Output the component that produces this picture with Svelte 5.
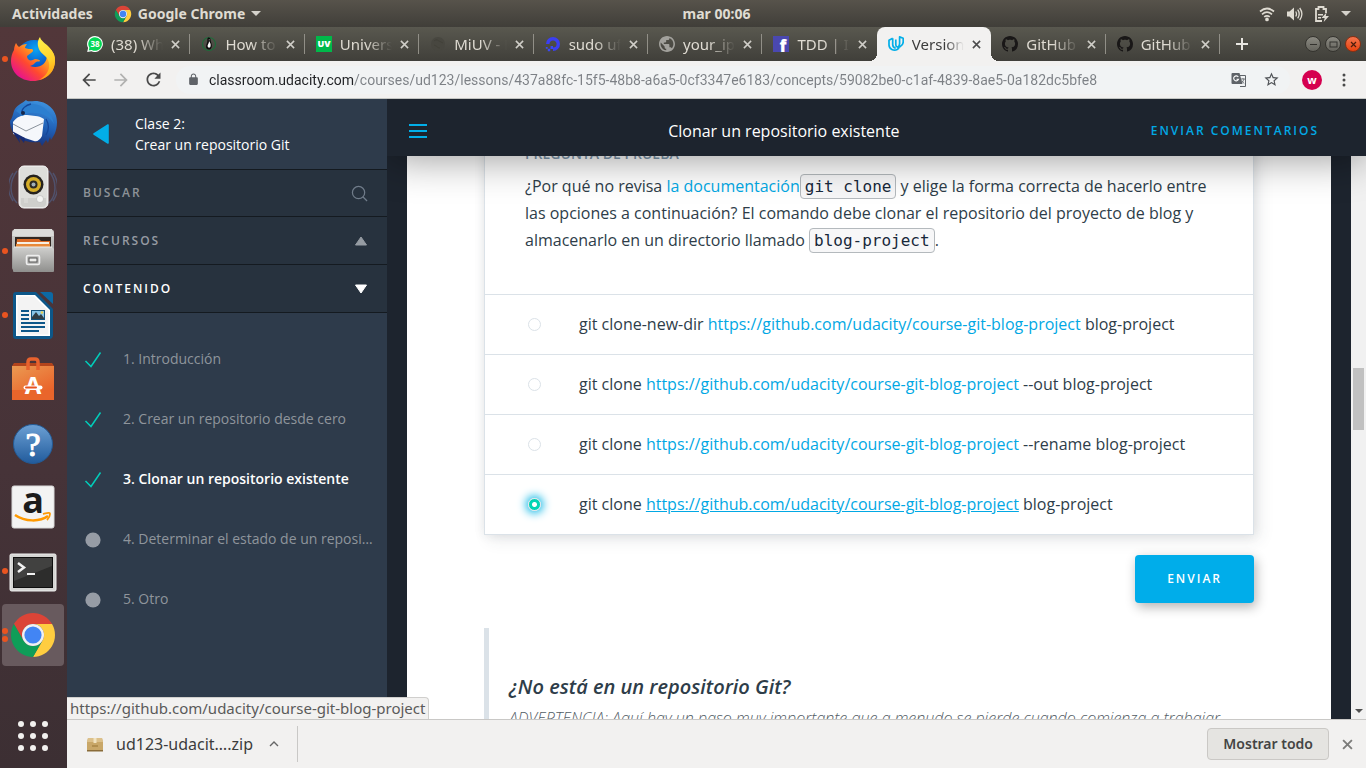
<script>
  const tabs = [
    { icon: 'whatsapp', title: '(38) WhatsApp' },
    { icon: 'penguin', title: 'How to install' },
    { icon: 'uv', title: 'Universidad' },
    { icon: 'miuv', title: 'MiUV - Login' },
    { icon: 'ocean', title: 'sudo ufw allow' },
    { icon: 'globe', title: 'your_ip_address' },
    { icon: 'facebook', title: 'TDD | Inicio' },
    { icon: 'udacity', title: 'Version Control', active: true },
    { icon: 'github', title: 'GitHub - course' },
    { icon: 'github', title: 'GitHub - course' }
  ];

  const apps = [
    { name: 'Firefox', dots: 1 },
    { name: 'Thunderbird', dots: 0 },
    { name: 'Rhythmbox', dots: 0 },
    { name: 'Archivos', dots: 1 },
    { name: 'Writer', dots: 1 },
    { name: 'Software', dots: 0 },
    { name: 'Ayuda', dots: 0 },
    { name: 'Amazon', dots: 0 },
    { name: 'Terminal', dots: 1 },
    { name: 'Chrome', dots: 2, focused: true }
  ];

  const lessons = [
    { title: '1. Introducción', done: true },
    { title: '2. Crear un repositorio desde cero', done: true },
    { title: '3. Clonar un repositorio existente', done: true, current: true },
    { title: '4. Determinar el estado de un repositorio', done: false },
    { title: '5. Otro', done: false }
  ];

  const repo = 'https://github.com/udacity/course-git-blog-project';
  const options = [
    { before: 'git clone-new-dir', after: 'blog-project' },
    { before: 'git clone', after: '--out blog-project' },
    { before: 'git clone', after: '--rename blog-project' },
    { before: 'git clone', after: 'blog-project', hovered: true }
  ];
  let chosen = $state(3);
  let url = $state('classroom.udacity.com/courses/ud123/lessons/437a88fc-15f5-48b8-a6a5-0cf3347e6183/concepts/59082be0-c1af-4839-8ae5-0a182dc5bfe8');
</script>

{#snippet chromeLogo(size)}
  <svg width={size} height={size} viewBox="0 0 48 48" aria-hidden="true">
    <path fill="#db4437" d="M24 13H43.05A22 22 0 0 0 4.95 13L14.47 29.5A11 11 0 0 1 24 13z" />
    <path fill="#ffcd40" d="M24 13H43.05A22 22 0 0 1 24 46L33.53 29.5A11 11 0 0 0 24 13z" />
    <path fill="#0f9d58" d="M14.47 29.5L4.95 13A22 22 0 0 0 24 46L33.53 29.5A11 11 0 0 1 14.47 29.5z" />
    <circle cx="24" cy="24" r="11" fill="#f1f1f1" />
    <circle cx="24" cy="24" r="8.6" fill="#4285f4" />
  </svg>
{/snippet}

{#snippet cross(color, size)}
  <svg width={size} height={size} viewBox="0 0 10 10" aria-hidden="true">
    <path d="M1 1L9 9M9 1L1 9" stroke={color} stroke-width="1.7" />
  </svg>
{/snippet}

{#snippet favicon(kind)}
  <svg class="favicon" width="16" height="16" viewBox="0 0 16 16" aria-hidden="true">
    {#if kind === 'whatsapp'}
      <path d="M8 0a8 8 0 1 1-3.6 15.2L.2 16l.9-4A8 8 0 0 1 8 0z" fill="#fff" />
      <path d="M8 1.2a6.8 6.8 0 1 1-3.3 12.7l-3 .7.7-2.9A6.8 6.8 0 0 1 8 1.2z" fill="#05d857" />
      <text x="8" y="11" text-anchor="middle" font-size="8" font-weight="700" fill="#fff">38</text>
    {:else if kind === 'penguin'}
      <circle cx="8" cy="8" r="6.5" fill="none" stroke="#1e6b3a" stroke-width="1.2" />
      <path d="M7.3 1.5c1.7-.2 2.4 1 2.2 2.6-.1 1.4 1.5 3 1.3 5.8-.2 2.4-1.500 3.600-2.900 3.600-1.800 0-3-1.200-2.800-3.300.2-2.300 1.300-3.400 1.300-5.300 0-1.600-.2-3 .9-3.400z" fill="#0b0b0b" />
      <path d="M8 5c1.500 2 2 3.500 1.500 5.500-.4 1.500-2.500 1.600-2.900.1C6.200 8.800 8.200 7.500 8 5z" fill="#fff" />
      <path d="M7.700 3.500l1.300.3-1.100.7z" fill="#fff" />
    {:else if kind === 'uv'}
      <rect width="16" height="16" fill="#00b84a" />
      <text x="8" y="11" text-anchor="middle" font-size="9" font-weight="800" fill="#fff">UV</text>
    {:else if kind === 'miuv'}
      <circle cx="8" cy="8" r="7" fill="#484740" />
      <path d="M4 5c2-2 4-1 5 0s3 1 4 2M4 9c2 0 3 3 6 3" stroke="#424139" fill="none" />
    {:else if kind === 'ocean'}
      <path d="M8 13.300A5.300 5.300 0 1 0 2.700 8" fill="none" stroke="#3b3ff2" stroke-width="3.400" />
      <path d="M5.500 10H8v3H5.500zM2.800 12.800h2.400v2.400H2.800zM.8 10.900h1.900v1.900H.8z" fill="#3b49f4" />
    {:else if kind === 'globe'}
      <path transform="translate(-1.6 -1.6) scale(.8)" fill="#a2a19c" d="M12 2C6.480 2 2 6.480 2 12s4.480 10 10 10 10-4.480 10-10S17.520 2 12 2zm-1 17.930c-3.950-.49-7-3.850-7-7.930 0-.62.08-1.210.21-1.790L9 15v1c0 1.100.9 2 2 2v1.930zm6.900-2.540c-.26-.81-1-1.390-1.900-1.390h-1v-3c0-.55-.45-1-1-1H8v-2h2c.55 0 1-.45 1-1V7h2c1.100 0 2-.9 2-2v-.41c2.930 1.190 5 4.060 5 7.410 0 2.080-.8 3.970-2.100 5.390z" />
    {:else if kind === 'facebook'}
      <rect width="16" height="16" fill="#4a48b0" />
      <text x="10" y="16" text-anchor="middle" font-size="17" font-weight="800" fill="#fff">f</text>
    {:else if kind === 'udacity'}
      <path d="M4.700 2.300L1 4.200v4.900c0 3.900 4.800 6.200 8.200 4.400 1.500-.8 2-2.300 2-3.800M4.700 2.300v6.300c0 2 1.200 3.300 3 3.500M7.800 3.500v5.300c0 2.600 2.600 2.700 4.200 1.900 2.300-1.100 3.200-2.600 3.200-4.700V2.200L11.600.9v6.500c0 1.500-.5 2.800-1.700 3.500" fill="none" stroke="#02aee8" stroke-width="1.700" stroke-linejoin="round" />
    {:else}
      <path fill="#191717" d="M8 0C3.580 0 0 3.580 0 8c0 3.540 2.290 6.530 5.470 7.590.4.070.55-.17.55-.38 0-.19-.01-.82-.01-1.490-2.010.37-2.530-.49-2.690-.94-.09-.23-.48-.94-.82-1.130-.28-.15-.68-.52-.01-.53.63-.01 1.080.58 1.230.82.72 1.210 1.870.87 2.330.66.07-.52.28-.87.51-1.070-1.780-.2-3.640-.89-3.640-3.950 0-.87.31-1.590.82-2.150-.08-.2-.36-1.020.08-2.120 0 0 .67-.21 2.200.82.64-.18 1.320-.27 2-.27s1.360.09 2 .27c1.530-1.040 2.200-.82 2.200-.82.44 1.100.16 1.920.08 2.120.51.56.82 1.270.82 2.150 0 3.070-1.870 3.750-3.650 3.950.29.25.54.73.54 1.480 0 1.070-.01 1.930-.01 2.200 0 .21.15.46.55.38A8.010 8.010 0 0 0 16 8c0-4.420-3.580-8-8-8z" />
    {/if}
  </svg>
{/snippet}

{#snippet appIcon(name)}
  {#if name === 'Chrome'}
    {@render chromeLogo(48)}
  {:else}
    <svg width="48" height="48" viewBox="0 0 48 48" aria-hidden="true">
      {#if name === 'Firefox'}
        <defs>
          <linearGradient id="ff-body" x1=".9" y1=".1" x2=".15" y2=".85">
            <stop offset="0" stop-color="#ffd83a" /><stop offset=".35" stop-color="#ff9a1f" /><stop offset=".65" stop-color="#ff4a2f" /><stop offset="1" stop-color="#e8148c" />
          </linearGradient>
          <linearGradient id="ff-tail" x1=".3" y1="0" x2=".5" y2="1">
            <stop offset="0" stop-color="#fff04a" /><stop offset=".6" stop-color="#ffd02a" /><stop offset="1" stop-color="#ff9a12" />
          </linearGradient>
          <radialGradient id="ff-globe" cx=".55" cy=".25" r=".8">
            <stop offset="0" stop-color="#0aa5f5" /><stop offset=".6" stop-color="#0a58c8" /><stop offset="1" stop-color="#20196b" />
          </radialGradient>
        </defs>
        <circle cx="25" cy="23" r="18" fill="url(#ff-globe)" />
        <path d="M7 8c1 2 2 3 3 4 2-2 5-3 8-3-1 1-2 3-2 4 2 1 5 1 7 1 2 1 1 3-1 4l-4 3c0 2 1 3 2 4 2 1 4 0 6-1 3 0 5 1 5 2-1 1-2 0-4 1-2 2-3 3-6 4 8 3 17-1 17-11 0-5-2-8-4-11 8 4 12 9 12 16 0 12-9 21-22 21S2 37 2 26c0-4 1-8 3-11 0-3 1-5 2-7z" fill="url(#ff-body)" />
        <path d="M31 2c1 4 5 6 9 10 4 4 6 9 6 14 0 10-7 17-16 19 7-4 11-9 10-17-1-6-6-8-9-12-3-5-3-10 0-14z" fill="url(#ff-tail)" />
      {:else if name === 'Thunderbird'}
        <defs>
          <linearGradient id="tb" x1=".7" y1="0" x2=".4" y2="1">
            <stop offset="0" stop-color="#3f94e0" /><stop offset=".55" stop-color="#1f5fb5" /><stop offset="1" stop-color="#162c73" />
          </linearGradient>
        </defs>
        <path d="M5 12C7 6 14 4 17 1c1 2 5 1 9 1 12 0 22 9 22 21 0 10-4 15-6 18l-1-3-2 6-2-3-4 6-2-4C16 45 1 38 1 22c2-2 3-7 4-10z" fill="url(#tb)" />
        <path d="M4 23c4-5 8-7 14-7 6 1 11 0 17 4l-2 17c-2 4-5 6-8 5L4 35z" fill="#f5f7fb" />
        <path d="M4 25l13 7 17-8" fill="none" stroke="#8a929c" />
        <path d="M7 12c4-6 11-8 18-7 9 1 18 8 20 20-4-7-11-11-19-11-5-1-9 1-13 3-2-2-4-4-6-5z" fill="#2c7fd0" />
        <path d="M22 5c-5 1-10 5-9 9M37 20c3 5 3 11 0 16" stroke="#14469a" stroke-width="1.300" fill="none" />
        <circle cx="14" cy="14" r="2" fill="#16264a" />
        <path d="M3 32l8 12-1-6 5 6 1-5z" fill="#172b74" />
      {:else if name === 'Rhythmbox'}
        <path d="M8 8C0 18 0 32 8 40M4 10C-2 19-2 29 4 38M40 8c8 10 8 24 0 32M44 10c6 9 6 19 0 28" fill="none" stroke="#50516b" stroke-width="1.500" />
        <rect x="10" y="3" width="29" height="42" rx="5" fill="#dededb" stroke="#f8f8f8" />
        <path d="M12 35h25v5a4 4 0 0 1-4 4H16a4 4 0 0 1-4-4z" fill="#cfcfcc" />
        <circle cx="24.500" cy="21.500" r="10" fill="#25221e" />
        <circle cx="24.500" cy="21.500" r="7.500" fill="#d5ad28" />
        <circle cx="24.500" cy="21.500" r="4" fill="#2c2a25" />
        <circle cx="24.500" cy="21.500" r="2" fill="#a2b0b8" />
        <circle cx="31" cy="36" r="3.500" fill="#f4f4f2" stroke="#aaa" stroke-width=".5" />
        <rect x="15" y="35" width="4" height="5" fill="#d8d8d5" />
      {:else if name === 'Archivos'}
        <defs>
          <linearGradient id="cab" x2="0" y2="1"><stop offset="0" stop-color="#d0d0ce" /><stop offset="1" stop-color="#8f8f8d" /></linearGradient>
        </defs>
        <rect x="3" y="3" width="42" height="40" rx="2" fill="url(#cab)" />
        <path d="M5 2h38l2 7H3z" fill="#dcdcda" />
        <rect x="6" y="10" width="36" height="10" fill="#312722" />
        <path d="M8 12h22l2 2h9v6H7z" fill="#dc6b27" />
        <path d="M8 15h32v2H8z" fill="#f6efe3" /><path d="M7 17h34v3H7z" fill="#e88939" />
        <path d="M5 20h38l2 2v22a1 1 0 0 1-1 1H5a1 1 0 0 1-1-1V21z" fill="url(#cab)" />
        <path d="M5 20h38" stroke="#eee" />
        <rect x="17.500" y="28.500" width="13" height="9" rx="1.500" fill="#b5b5b3" stroke="#eee" stroke-width="1.600" />
        <rect x="20" y="31" width="8" height="4" fill="#ececea" stroke="#555" />
      {:else if name === 'Writer'}
        <path d="M7 1h20l17 17v26a4 4 0 0 1-4 4H7a3 3 0 0 1-3-3V4a3 3 0 0 1 3-3z" fill="#0d5789" />
        <path d="M7 4h19l15 15v26H7z" fill="#fff" />
        <path d="M8.500 5.500H25l14.500 14.500V43.500h-31z" fill="#f3f3f3" />
        <path d="M31 1h10a3 3 0 0 1 3 3v9z" fill="#0d69a4" />
        <path d="M12 20h8M12 24h8M12 28h8M12 32h24M12 36h24M12 40h18" stroke="#0d5789" stroke-width="2" />
        <rect x="22.500" y="19.500" width="13" height="9" fill="#87c4e8" stroke="#12517c" />
        <path d="M23 28v-2l4-5 3 4 2-2 3 4v1z" fill="#303d45" /><circle cx="33" cy="21.500" r="1.300" fill="#e9cf50" />
      {:else if name === 'Software'}
        <defs>
          <linearGradient id="bag" x2=".6" y2="1"><stop offset="0" stop-color="#eb9a52" /><stop offset="1" stop-color="#ea5f27" /></linearGradient>
        </defs>
        <path d="M5 8h38l2 3H3z" fill="#b3441c" />
        <path d="M3 11h42v34H3z" fill="url(#bag)" /><path d="M3 35h42v10H3z" fill="#e9652b" />
        <path d="M19 15V7q0-3 3-3h4q3 0 3 3v8" fill="none" stroke="#e8622e" stroke-width="3.500" />
        <text x="24" y="39" text-anchor="middle" font-size="24" font-weight="700" fill="#fff">A</text>
        <rect x="14.500" y="30.500" width="19" height="4" rx="2" fill="#fff" /><rect x="16" y="31.500" width="12" height="2" rx="1" fill="#e95420" />
      {:else if name === 'Ayuda'}
        <defs>
          <linearGradient id="help" x2="0" y2="1"><stop offset="0" stop-color="#6ca0d4" /><stop offset="1" stop-color="#215b9c" /></linearGradient>
        </defs>
        <circle cx="24" cy="25" r="19.500" fill="url(#help)" stroke="#235a94" />
        <text x="24" y="37" text-anchor="middle" font-size="34" font-weight="400" fill="#fff" stroke="#fff" class="serif">?</text>
      {:else if name === 'Amazon'}
        <rect x="3" y="3" width="42" height="42" rx="2" fill="#f3f3f3" stroke="#dadada" />
        <text x="24" y="30" text-anchor="middle" font-size="36" font-weight="700" fill="#1c1c1c">a</text>
        <path d="M6 32c10 7 25 7 33 1" fill="none" stroke="#ff9900" stroke-width="2.500" />
        <path d="M34 31c4-1 7-2 7 0s-1 4-3 6" fill="none" stroke="#ff9900" stroke-width="1.800" />
      {:else if name === 'Terminal'}
        <rect x="1" y="7" width="46" height="37" rx="1.500" fill="#d5d5d3" stroke="#eee" />
        <rect x="4.500" y="10.500" width="39" height="30" fill="#2d2d2c" stroke="#0e0e0e" />
        <path d="M5 11h38v8L5 34z" fill="#414140" />
        <path d="M9 16l6 4.500L9 25" fill="none" stroke="#f1f1f1" stroke-width="2.500" /><path d="M18 27h8" stroke="#f1f1f1" stroke-width="2" />
      {/if}
    </svg>
  {/if}
{/snippet}

<div class="desktop">
  <header class="system-bar">
    <div class="system-side">
      <button class="plain">Actividades</button>
      <button class="plain app-menu">
        {@render chromeLogo(18)}
        <span>Google Chrome</span>
        <svg width="10" height="6" viewBox="0 0 10 6" aria-hidden="true"><path d="M0 0h10L5 5z" fill="#d5d2cb" /></svg>
      </button>
    </div>
    <time>mar 00:06</time>
    <div class="system-side indicators">
      <svg width="16" height="16" viewBox="0 0 16 16" fill="none" stroke="#dfdbd2" stroke-width="1.700" aria-hidden="true">
        <path d="M1 5.500Q8-.5 15 5.500M3 8.300q5-4.200 10 0M5.200 10.900q2.800-2.200 5.600 0" /><circle cx="8" cy="13.400" r="1" fill="#dfdbd2" />
      </svg>
      <svg width="17" height="16" viewBox="0 0 17 16" aria-hidden="true">
        <path d="M1 5.500h2.500L8 1.500v13l-4.500-4H1z" fill="#dfdbd2" /><path d="M9.700 5.500q1.600 2.500 0 5M11.700 3.700q3 4.300 0 8.600M13.700 2q4.400 6 0 12" fill="none" stroke="#dfdbd2" stroke-width="1.300" />
      </svg>
      <svg width="16" height="18" viewBox="0 0 16 18" aria-hidden="true">
        <path d="M8 16H2V4h2.500V2h5v2H12v4" fill="none" stroke="#dfdbd2" stroke-width="1.800" /><path d="M4 9h5v1.500H4zM4 12h3v1.500H4z" fill="#dfdbd2" /><path d="M12.500 7.500L7.500 13h3.200l-1 4 5.300-6h-3.200z" fill="#dfdbd2" />
      </svg>
      <svg width="10" height="6" viewBox="0 0 10 6" aria-hidden="true"><path d="M0 0h10L5 5z" fill="#d5d2cb" /></svg>
    </div>
  </header>

  <div class="workspace">
    <nav class="dock" aria-label="Aplicaciones">
      {#each apps as app}
        <button class="dock-item" class:focused={app.focused} aria-label={app.name}>
          <span class="dots">{#each Array(app.dots) as _}<i></i>{/each}</span>
          {@render appIcon(app.name)}
        </button>
      {/each}
      <button class="all-apps" aria-label="Mostrar aplicaciones">
        {#each Array(9) as _}<i></i>{/each}
      </button>
    </nav>

    <div class="browser">
      <div class="tab-strip">
        <div class="tabs">
          {#each tabs as tab, i}
            <div class="tab" class:active={tab.active} class:divided={!tab.active && !tabs[i + 1]?.active}>
              {@render favicon(tab.icon)}
              <span class="tab-title">{tab.title}</span>
              <button class="plain close" aria-label="Cerrar pestaña">{@render cross(tab.active ? '#4c4c4c' : '#d0cec8', 9)}</button>
            </div>
          {/each}
        </div>
        <button class="plain" aria-label="Nueva pestaña">
          <svg width="12" height="12" viewBox="0 0 12 12" aria-hidden="true"><path d="M6 0v12M0 6h12" stroke="#e8e6e1" stroke-width="2" /></svg>
        </button>
        <div class="window-buttons">
          <button aria-label="Minimizar"><svg width="9" height="9" viewBox="0 0 9 9"><path d="M1 4.500h7" stroke="#33322e" /></svg></button>
          <button aria-label="Maximizar"><svg width="9" height="9" viewBox="0 0 9 9"><rect x="1" y="2" width="7" height="5" fill="none" stroke="#33322e" /></svg></button>
          <button class="shut" aria-label="Cerrar"><svg width="9" height="9" viewBox="0 0 9 9"><path d="M2 2l5 5M7 2L2 7" stroke="#4c1d0c" stroke-width="1.200" /></svg></button>
        </div>
      </div>

      <div class="toolbar">
        <button class="plain" aria-label="Atrás"><svg width="20" height="20" viewBox="0 0 24 24" fill="#4a4a4a"><path d="M20 11H7.830l5.590-5.590L12 4l-8 8 8 8 1.410-1.410L7.830 13H20v-2z" /></svg></button>
        <button class="plain" aria-label="Adelante"><svg width="20" height="20" viewBox="0 0 24 24" fill="#b1b1b0"><path d="M12 4l-1.410 1.410L16.170 11H4v2h12.170l-5.580 5.590L12 20l8-8z" /></svg></button>
        <button class="plain" aria-label="Recargar"><svg width="21" height="21" viewBox="0 0 24 24" fill="#4a4a4a"><path d="M17.650 6.350C16.200 4.900 14.210 4 12 4c-4.420 0-7.990 3.580-7.990 8s3.570 8 7.990 8c3.730 0 6.840-2.550 7.730-6h-2.080c-.82 2.330-3.040 4-5.650 4-3.310 0-6-2.690-6-6s2.690-6 6-6c1.660 0 3.140.69 4.220 1.780L13 11h7V4l-2.350 2.350z" /></svg></button>
        <div class="omnibox">
          <svg width="13" height="13" viewBox="0 0 24 24" fill="#5f6368" aria-hidden="true"><path d="M18 8h-1V6c0-2.760-2.240-5-5-5S7 3.240 7 6v2H6c-1.100 0-2 .9-2 2v10c0 1.100.9 2 2 2h12c1.100 0 2-.9 2-2V10c0-1.100-.9-2-2-2zM15.100 8H8.900V6c0-1.710 1.390-3.100 3.100-3.100s3.100 1.390 3.100 3.100v2z" /></svg>
          <input class="url" type="text" aria-label="Dirección" bind:value={url} />
          <button class="plain" aria-label="Traducir">
            <svg width="16" height="16" viewBox="0 0 16 16"><path d="M8 3.500h6.500v11H9" fill="#f1f3f4" stroke="#5f6368" /><path d="M1.500 1h7l3 11h-10A1 1 0 0 1 .5 11V2a1 1 0 0 1 1-1z" fill="#5f6368" /><path d="M7.300 5A2.500 2.500 0 1 0 7.500 7.300H5.500" fill="none" stroke="#fff" stroke-width="1.100" /><path d="M10 7h4M12 6v1M13 7c-.5 2-1.500 3-2.500 4M10.800 8.500q1 2 2.500 3" fill="none" stroke="#5f6368" stroke-width=".8" /></svg>
          </button>
          <button class="plain" aria-label="Añadir a marcadores">
            <svg width="17" height="17" viewBox="0 0 24 24" fill="#4f5256"><path d="M22 9.240l-7.190-.62L12 2 9.190 8.630 2 9.240l5.460 4.730L5.820 21 12 17.270 18.180 21l-1.630-7.030L22 9.240zM12 15.400l-3.760 2.270 1-4.280-3.320-2.880 4.380-.38L12 6.100l1.710 4.040 4.380.38-3.320 2.880 1 4.280L12 15.400z" /></svg>
          </button>
        </div>
        <button class="avatar">w</button>
        <button class="plain" aria-label="Menú"><svg width="4" height="14" viewBox="0 0 4 14" fill="#4a4a4a"><circle cx="2" cy="2" r="1.500" /><circle cx="2" cy="7" r="1.500" /><circle cx="2" cy="12" r="1.500" /></svg></button>
      </div>

      <div class="page">
        <aside class="sidebar">
          <a class="lesson-head" href="#clase">
            <svg width="16" height="20" viewBox="0 0 16 20" aria-hidden="true"><path d="M15 1v18L1 10z" fill="#02aee8" stroke="#02aee8" stroke-width="1.600" stroke-linejoin="round" /></svg>
            <span>Clase 2:<br />Crear un repositorio Git</span>
          </a>
          <label class="panel search">
            <input type="text" placeholder="BUSCAR" aria-label="BUSCAR" />
            <svg width="17" height="17" viewBox="0 0 18 18" fill="none" stroke="#707c8a" stroke-width="1.300" aria-hidden="true"><circle cx="8" cy="8" r="6.500" /><path d="M12.500 12.500L17 17" /></svg>
          </label>
          <button class="panel">RECURSOS
            <svg width="14" height="10" viewBox="0 0 14 10" aria-hidden="true"><path d="M7 1l5.500 8h-11z" fill="#969ca3" stroke="#969ca3" stroke-linejoin="round" /></svg>
          </button>
          <button class="panel open">CONTENIDO
            <svg width="14" height="10" viewBox="0 0 14 10" aria-hidden="true"><path d="M7 9l5.500-8h-11z" fill="#fff" stroke="#fff" stroke-linejoin="round" /></svg>
          </button>
          <ol>
            {#each lessons as lesson}
              <li class:current={lesson.current}>
                <svg width="18" height="18" viewBox="0 0 18 18" aria-hidden="true">
                  {#if lesson.done}
                    <path d="M1.500 11L7 16.500 16.500 2.500" fill="none" stroke="#02ccba" stroke-width="1.500" />
                  {:else}
                    <circle cx="9" cy="10" r="7.600" fill="#969ca5" />
                  {/if}
                </svg>
                <a href="#leccion">{lesson.title}</a>
              </li>
            {/each}
          </ol>
        </aside>

        <main>
          <header class="course-bar">
            <button class="plain" aria-label="Menú del curso">
              <svg width="18" height="14" viewBox="0 0 18 14"><path d="M0 1h18M0 7h18M0 13h18" stroke="#02aee8" stroke-width="2" /></svg>
            </button>
            <h1>Clonar un repositorio existente</h1>
            <a href="#comentarios">ENVIAR COMENTARIOS</a>
          </header>

          <div class="viewport">
            <div class="sheet">
              <article>
                <form class="quiz" onsubmit={(e) => e.preventDefault()}>
                  <div class="question">
                    <h2>PREGUNTA DE PRUEBA</h2>
                    <p>¿Por qué no revisa <a href="#doc">la documentación</a><code>git clone</code> y elige la forma correcta de hacerlo entre las opciones a continuación? El comando debe clonar el repositorio del proyecto de blog y almacenarlo en un directorio llamado <code>blog-project</code>.</p>
                  </div>
                  {#each options as option, i}
                    <div class="option">
                      <input type="radio" id={`opcion-${i}`} name="respuesta" value={i} bind:group={chosen} />
                      <label for={`opcion-${i}`}>{option.before} <a class:hovered={option.hovered} href={repo}>{repo}</a> {option.after}</label>
                    </div>
                  {/each}
                </form>
                <button class="submit">ENVIAR</button>
                <blockquote>
                  <h3>¿No está en un repositorio Git?</h3>
                  <p>ADVERTENCIA: Aquí hay un paso muy importante que a menudo se pierde cuando comienza a trabajar</p>
                </blockquote>
              </article>
            </div>
            <div class="scrollbar">
              <div class="thumb"></div>
              <svg width="8" height="5" viewBox="0 0 8 5" aria-hidden="true"><path d="M0 0h8L4 4z" fill="#505050" /></svg>
            </div>
          </div>
        </main>
        <div class="link-status">https://github.com/udacity/course-git-blog-project</div>
      </div>

      <footer class="downloads">
        <button class="plain download">
          <svg width="16" height="15" viewBox="0 0 16 15" aria-hidden="true"><path d="M1 1h14l1 4v9H0V5z" fill="#c9a768" /><path d="M1 1h14l1 4H0z" fill="#dcc08a" /><path d="M0 13h16v1.500H0z" fill="#8a6c39" /><path d="M6.500 1h3v5h-3z" fill="#f1e3c1" /><path d="M5 8h6v2H5z" fill="#b18e4e" /></svg>
          <span>ud123-udacit….zip</span>
          <svg width="10" height="6" viewBox="0 0 10 6" aria-hidden="true"><path d="M1 5l4-4 4 4" fill="none" stroke="#666" stroke-width="1.400" /></svg>
        </button>
        <button class="show-all">Mostrar todo</button>
        <button class="plain" aria-label="Cerrar barra">{@render cross('#7c7c7a', 11)}</button>
      </footer>
    </div>
  </div>
</div>

<style>
  :global(body) {
    margin: 0;
  }
  :global(*) {
    box-sizing: border-box;
  }
  .desktop {
    height: 100vh;
    display: flex;
    flex-direction: column;
    overflow: hidden;
    font: 15px/20px "Noto Sans", sans-serif;
    color: #3c3c3c;
  }
  svg {
    display: block;
    flex: none;
  }
  svg text {
    font-family: "Open Sans", sans-serif;
  }
  svg text.serif {
    font-family: "Liberation Serif", serif;
  }
  button,
  input {
    font: inherit;
  }
  a {
    color: #02a8e4;
    text-decoration: none;
  }
  .plain {
    padding: 0;
    border: 0;
    background: none;
    color: inherit;
    flex: none;
  }

  .system-bar {
    flex: none;
    height: 27px;
    display: flex;
    align-items: center;
    padding: 0 15px 0 12px;
    background: linear-gradient(#57534b, #403e39);
    color: #dfdbd2;
    font-size: 14px;
    font-weight: 700;
  }
  .system-bar time {
    margin-left: 70px;
  }
  .system-side {
    flex: 1;
    display: flex;
    align-items: center;
    gap: 21px;
  }
  .app-menu {
    display: flex;
    align-items: center;
    gap: 6px;
  }
  .indicators {
    justify-content: flex-end;
    gap: 11px;
  }

  .workspace {
    flex: 1;
    min-height: 0;
    display: flex;
  }
  .dock {
    flex: none;
    width: 67px;
    display: flex;
    flex-direction: column;
    align-items: flex-start;
    background: linear-gradient(#52373a, #463338 60%, #3c2f33);
  }
  .dock-item {
    position: relative;
    flex: none;
    width: 62px;
    height: 62px;
    margin: 1px 2px;
    padding: 0;
    border: 0;
    border-radius: 4px;
    background: none;
    display: grid;
    place-items: center;
  }
  .dock-item.focused {
    background: #685a5e;
  }
  .dots {
    position: absolute;
    left: 0;
    top: 0;
    bottom: 0;
    display: flex;
    flex-direction: column;
    justify-content: center;
    gap: 2px;
  }
  .dots i {
    width: 6px;
    height: 6px;
    border-radius: 50%;
    background: #e95420;
  }
  .all-apps {
    margin: auto 0 17px 18px;
    padding: 0;
    border: 0;
    background: none;
    display: grid;
    grid-template-columns: repeat(3, 6px);
    gap: 6px;
  }
  .all-apps i {
    height: 6px;
    border-radius: 50%;
    background: #f2f1ef;
  }

  .browser {
    flex: 1;
    min-width: 0;
    display: flex;
    flex-direction: column;
  }
  .tab-strip {
    flex: none;
    height: 34px;
    display: flex;
    align-items: center;
    padding: 0 5px 0 9px;
    background: linear-gradient(#59584f, #403f3a);
    color: #dfdbd2;
  }
  .tabs {
    flex: 1;
    min-width: 0;
    align-self: stretch;
    display: flex;
    margin-right: 16px;
  }
  .tab {
    position: relative;
    flex: 1 1 0;
    min-width: 0;
    display: flex;
    align-items: center;
    padding: 0 10px 0 11px;
  }
  .tab.divided::after {
    content: "";
    position: absolute;
    right: 0;
    top: 7px;
    bottom: 7px;
    width: 1px;
    background: #918f87;
  }
  .tab-title {
    flex: 1;
    min-width: 0;
    margin: 0 8px;
    overflow: hidden;
    white-space: nowrap;
    mask-image: linear-gradient(to right, #000 50%, transparent);
  }
  .tab.active {
    background: #f2f1f0;
    border-radius: 8px 8px 0 0;
    color: #3c3c3c;
  }
  .tab.active .tab-title {
    mask-image: linear-gradient(to right, #000 65%, transparent);
  }
  .tab.active::before,
  .tab.active::after {
    content: "";
    position: absolute;
    bottom: 0;
    width: 8px;
    height: 8px;
  }
  .tab.active::before {
    right: 100%;
    background: radial-gradient(circle at 0 0, transparent 8px, #f2f1f0 8px);
  }
  .tab.active::after {
    left: 100%;
    background: radial-gradient(circle at 100% 0, transparent 8px, #f2f1f0 8px);
  }
  .window-buttons {
    display: flex;
    gap: 4px;
    margin-left: auto;
    padding-left: 57px;
  }
  .window-buttons button {
    width: 16px;
    height: 16px;
    padding: 0;
    border: 1px solid #35342f;
    border-radius: 50%;
    background: linear-gradient(#8b8a82, #65645d);
    display: grid;
    place-items: center;
  }
  .window-buttons .shut {
    background: linear-gradient(#f4754e, #e8430f);
    border-color: #8a2f12;
  }

  .toolbar {
    flex: none;
    height: 38px;
    display: flex;
    align-items: center;
    gap: 12px;
    padding: 0 20px 0 12px;
    background: #f2f1f0;
    border-bottom: 1px solid #c4c6c3;
  }
  .omnibox {
    flex: 1;
    min-width: 0;
    height: 28px;
    display: flex;
    align-items: center;
    gap: 16px;
    padding: 0 10px 0 11px;
    border-radius: 14px;
    background: #f1f3f4;
  }
  .url {
    flex: 1;
    min-width: 0;
    margin-left: -7px;
    padding: 0;
    border: 0;
    outline: 0;
    color: transparent;
    font: 14px/20px Roboto, sans-serif;
    background: linear-gradient(to right, #202124 145px, #7c8085 145px);
    background-clip: text;
  }
  .avatar {
    flex: none;
    width: 20px;
    height: 20px;
    margin-right: 8px;
    padding: 0;
    border: 0;
    border-radius: 50%;
    background: #d5004f;
    color: #fff;
    font: 700 11px/18px "Noto Sans", sans-serif;
  }

  .page {
    position: relative;
    flex: 1;
    min-height: 0;
    display: flex;
    font-family: "Open Sans", sans-serif;
  }
  .sidebar {
    flex: none;
    width: 320px;
    background: #2e3b4b;
    color: #969ba3;
    font-size: 14px;
  }
  .lesson-head {
    height: 71px;
    display: flex;
    align-items: center;
    gap: 26px;
    padding: 0 26px;
    border-bottom: 1px solid #141a20;
    color: #fff;
    line-height: 21px;
  }
  .panel {
    width: 100%;
    height: 48px;
    display: flex;
    align-items: center;
    justify-content: space-between;
    padding: 0 19px 0 16px;
    border: 0;
    border-bottom: 1px solid #141a20;
    background: #27323e;
    color: #969ba3;
    font-size: 12px;
    font-weight: 600;
    letter-spacing: 2px;
  }
  .search {
    height: 47px;
  }
  .search input {
    flex: 1;
    min-width: 0;
    padding: 0;
    border: 0;
    outline: 0;
    background: none;
    color: #fff;
    letter-spacing: inherit;
  }
  .search input::placeholder {
    color: #8d9298;
    opacity: 1;
  }
  .open {
    color: #fff;
  }
  ol {
    margin: 0;
    padding: 16px 14px 0 17px;
    list-style: none;
  }
  li {
    height: 60px;
    display: flex;
    align-items: center;
    gap: 21px;
  }
  li a {
    min-width: 0;
    overflow: hidden;
    white-space: nowrap;
    text-overflow: ellipsis;
    color: #8f959c;
  }
  li.current a {
    color: #fff;
    font-weight: 600;
  }

  main {
    flex: 1;
    min-width: 0;
    display: flex;
    flex-direction: column;
    background: #1d242e;
  }
  .course-bar {
    position: relative;
    z-index: 1;
    flex: none;
    height: 57px;
    display: flex;
    align-items: center;
    justify-content: space-between;
    padding: 7px 37px 0 22px;
    background: #1d242e;
    box-shadow: 0 3px 40px rgba(0, 0, 0, 0.4);
    clip-path: inset(0 0 -60px 0);
  }
  .course-bar h1 {
    margin: 0;
    color: #fff;
    font-size: 16px;
    font-weight: 400;
    line-height: 20px;
  }
  .course-bar a {
    padding: 0 10px;
    font-size: 12px;
    font-weight: 600;
    letter-spacing: 2px;
  }
  .viewport {
    flex: 1;
    min-height: 0;
    display: flex;
    overflow: hidden;
  }
  .sheet {
    flex: 1;
    min-width: 0;
    margin: 0 20px;
    padding: 0 20px;
    background: #fff;
  }
  article {
    max-width: 770px;
    margin: -40px auto 0;
    display: flex;
    flex-direction: column;
    color: #2e3d49;
    font-size: 16px;
  }
  .quiz {
    border: 1px solid #dbe2e8;
    box-shadow: 5px 5px 15px rgba(46, 60, 73, 0.1), 0 0 10px rgba(46, 60, 73, 0.1);
  }
  .question {
    padding: 27px 40px 40px;
  }
  .question h2 {
    margin: 0 0 9px;
    color: #7d97ad;
    font-size: 14px;
    font-weight: 600;
    line-height: 20px;
  }
  .question p {
    margin: 0;
    line-height: 27px;
  }
  code {
    padding: 2px 4px;
    border: 1px solid #b4b9bd;
    border-radius: 4px;
    background: #f7f7f8;
    color: #17283a;
    font-family: "DejaVu Sans Mono", monospace;
    font-size: 16px;
    line-height: 16px;
  }
  .option {
    height: 60px;
    display: flex;
    align-items: center;
    gap: 38px;
    padding-left: 43px;
    border-top: 1px solid #dbe2e8;
  }
  .option label {
    padding-bottom: 2px;
  }
  .option input {
    flex: none;
    appearance: none;
    width: 13px;
    height: 13px;
    margin: 0;
    border: 1px solid #dbe2e8;
    border-radius: 50%;
    background: #fff;
  }
  .option input:checked {
    background: radial-gradient(circle, #fff 2px, #02d4b4 3px);
    box-shadow: 0 0 10px 2px #02b3e4;
  }
  .hovered {
    text-decoration: underline;
  }
  .submit {
    align-self: flex-end;
    height: 48px;
    margin-top: 20px;
    padding: 0 32px;
    border: 0;
    border-radius: 4px;
    background: #00adea;
    box-shadow: 2px 4px 12px rgba(0, 0, 0, 0.3);
    color: #fff;
    font-size: 12px;
    font-weight: 600;
    letter-spacing: 2px;
  }
  blockquote {
    margin: 25px 0 0;
    padding: 44px 0 40px 20px;
    border-left: 5px solid #dbe2e8;
    font-style: italic;
  }
  blockquote h3 {
    margin: 0 0 4px;
    font-size: 20px;
    font-weight: 600;
    line-height: 30px;
  }
  blockquote p {
    margin: 0;
    color: #525c65;
    font-weight: 300;
    line-height: 24px;
  }
  .scrollbar {
    position: relative;
    flex: none;
    width: 15px;
    display: flex;
    align-items: flex-end;
    justify-content: center;
    padding-bottom: 5px;
    background: #f1f1f1;
  }
  .thumb {
    position: absolute;
    top: 37.6%;
    left: 2px;
    right: 2px;
    height: 11%;
    background: #c1c1c1;
  }
  .link-status {
    position: absolute;
    left: 0;
    bottom: 0;
    z-index: 2;
    padding: 0 3px;
    border: 1px solid #d0cfcd;
    border-width: 1px 1px 0 0;
    border-radius: 0 4px 0 0;
    background: #f2f1f0;
    color: #5a5a5a;
    font: 15px/21px "Noto Sans", sans-serif;
  }

  .downloads {
    flex: none;
    height: 49px;
    display: flex;
    align-items: center;
    gap: 13px;
    padding: 0 13px 0 20px;
    border-top: 1px solid #c9c8c6;
    background: #f2f1f0;
  }
  .download {
    height: 36px;
    display: flex;
    align-items: center;
    gap: 13px;
    padding-right: 18px;
    border-right: 1px solid #c9c8c6;
  }
  .download span {
    margin-right: 3px;
    font-size: 16px;
  }
  .show-all {
    height: 32px;
    margin-left: auto;
    padding: 0 15px;
    border: 1px solid #cac8c5;
    border-radius: 4px;
    background: #e5e4e1;
    color: #444;
    font-weight: 600;
    font-size: 14px;
  }
</style>
